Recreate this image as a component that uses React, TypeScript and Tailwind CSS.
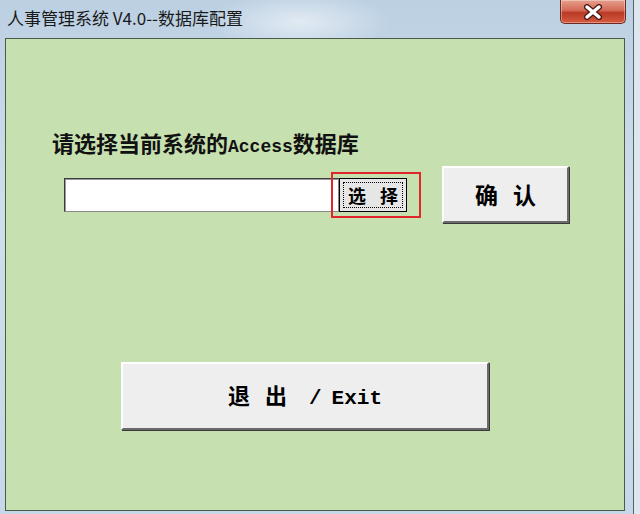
import React from "react";

const CJK = "font-['Noto_Sans_CJK_SC',_'Noto_Sans',_sans-serif]";

function CloseButton() {
  return (
    <div className="mr-[7px] flex h-[24px] w-[66px] items-center justify-center self-start rounded-b-[5px] border border-t-0 border-[#6e2a1e] bg-[linear-gradient(to_bottom,#e6a08e_0%,#d46a55_45%,#b93a26_55%,#d65a3f_100%)] shadow-[inset_0_0_0_1px_rgba(255,255,255,0.35)]">
      <svg width="20" height="16" viewBox="0 0 20 16">
        <path d="M4 3 L16 13 M16 3 L4 13" stroke="#4a1a12" strokeWidth="6" strokeLinecap="round" />
        <path d="M4 3 L16 13 M16 3 L4 13" stroke="#ffffff" strokeWidth="3.5" strokeLinecap="round" />
      </svg>
    </div>
  );
}

function ClassicButton({ className, children }: { className: string; children: React.ReactNode }) {
  return (
    <div
      className={`flex items-center justify-center border-t-2 border-l-2 border-t-white border-l-white border-r-2 border-b-2 border-r-[#6b6b6b] border-b-[#6b6b6b] bg-[#eeeeee] shadow-[1px_1px_0_#3a3a3a] text-black font-bold leading-none ${className}`}
    >
      {children}
    </div>
  );
}

export default function App() {
  return (
    <div className="flex h-[514px] w-[640px] overflow-hidden bg-[#dfe7ee]">
      <div className="flex w-[634px] flex-col border-r border-[#55636f] bg-[linear-gradient(to_bottom,#bcd0e3_0%,#cfdeeb_40%,#c6d8e8_100%)]">
        {/* title bar */}
        <div className="flex h-[38px] items-start justify-between bg-[radial-gradient(ellipse_90px_30px_at_300px_22px,rgba(255,255,255,0.55),rgba(255,255,255,0))]">
          <div className={`${CJK} pl-[7px] pt-[5px] text-[17px] leading-[26px] text-[#1a1a1a]`}>
            人事管理系统 V4.0--数据库配置
          </div>
          <CloseButton />
        </div>

        {/* client area */}
        <div className="ml-[5px] mr-[8px] mb-[3px] flex h-[473px] flex-col border border-[#4d5a4a] bg-[#c7e0b0]">
          <div className={`${CJK} ml-[46px] mt-[89px] flex h-[28px] items-baseline text-[22px] font-bold leading-[28px] text-[#111]`}>
            <span>请选择当前系统的</span>
            <span className="font-['Liberation_Mono',_monospace] text-[18px]">Access</span>
            <span>数据库</span>
          </div>

          <div className="ml-[58px] mt-[10px] flex items-center">
            <div className="h-[34px] w-[275px] border border-t-[#3c3c3c] border-l-[#3c3c3c] border-r-[#8a8a8a] border-b-[#8a8a8a] bg-white shadow-[inset_1px_1px_0_#9a9a9a]" />
            <div className="relative">
              <div className="flex h-[34px] w-[68px] items-center justify-center border border-black bg-[#e6e6e6] p-[3px]">
                <div className={`${CJK} flex h-full w-full items-center justify-center gap-[14px] border border-dotted border-black text-[18px] font-bold leading-none text-black`}>
                  <span>选</span>
                  <span>择</span>
                </div>
              </div>
              <div className="pointer-events-none absolute -left-[8px] -right-[14px] -top-[6px] -bottom-[6px] border-2 border-[#e0262a]" />
            </div>
            <ClassicButton className={`${CJK} ml-[35px] h-[57px] w-[127px] gap-[15px] text-[23px]`}>
              <span>确</span>
              <span>认</span>
            </ClassicButton>
          </div>

          <ClassicButton className={`${CJK} ml-[115px] mt-[139px] h-[68px] w-[368px] text-[22px]`}>
            <span className="flex items-baseline">
              <span>退</span>
              <span className="ml-[15px]">出</span>
              <span className="ml-[22px] font-['Liberation_Mono',_monospace] text-[21px]">/</span>
              <span className="ml-[10px] font-['Liberation_Mono',_monospace] text-[21px]">Exit</span>
            </span>
          </ClassicButton>
        </div>
      </div>
      <div className="w-[6px]" />
    </div>
  );
}
